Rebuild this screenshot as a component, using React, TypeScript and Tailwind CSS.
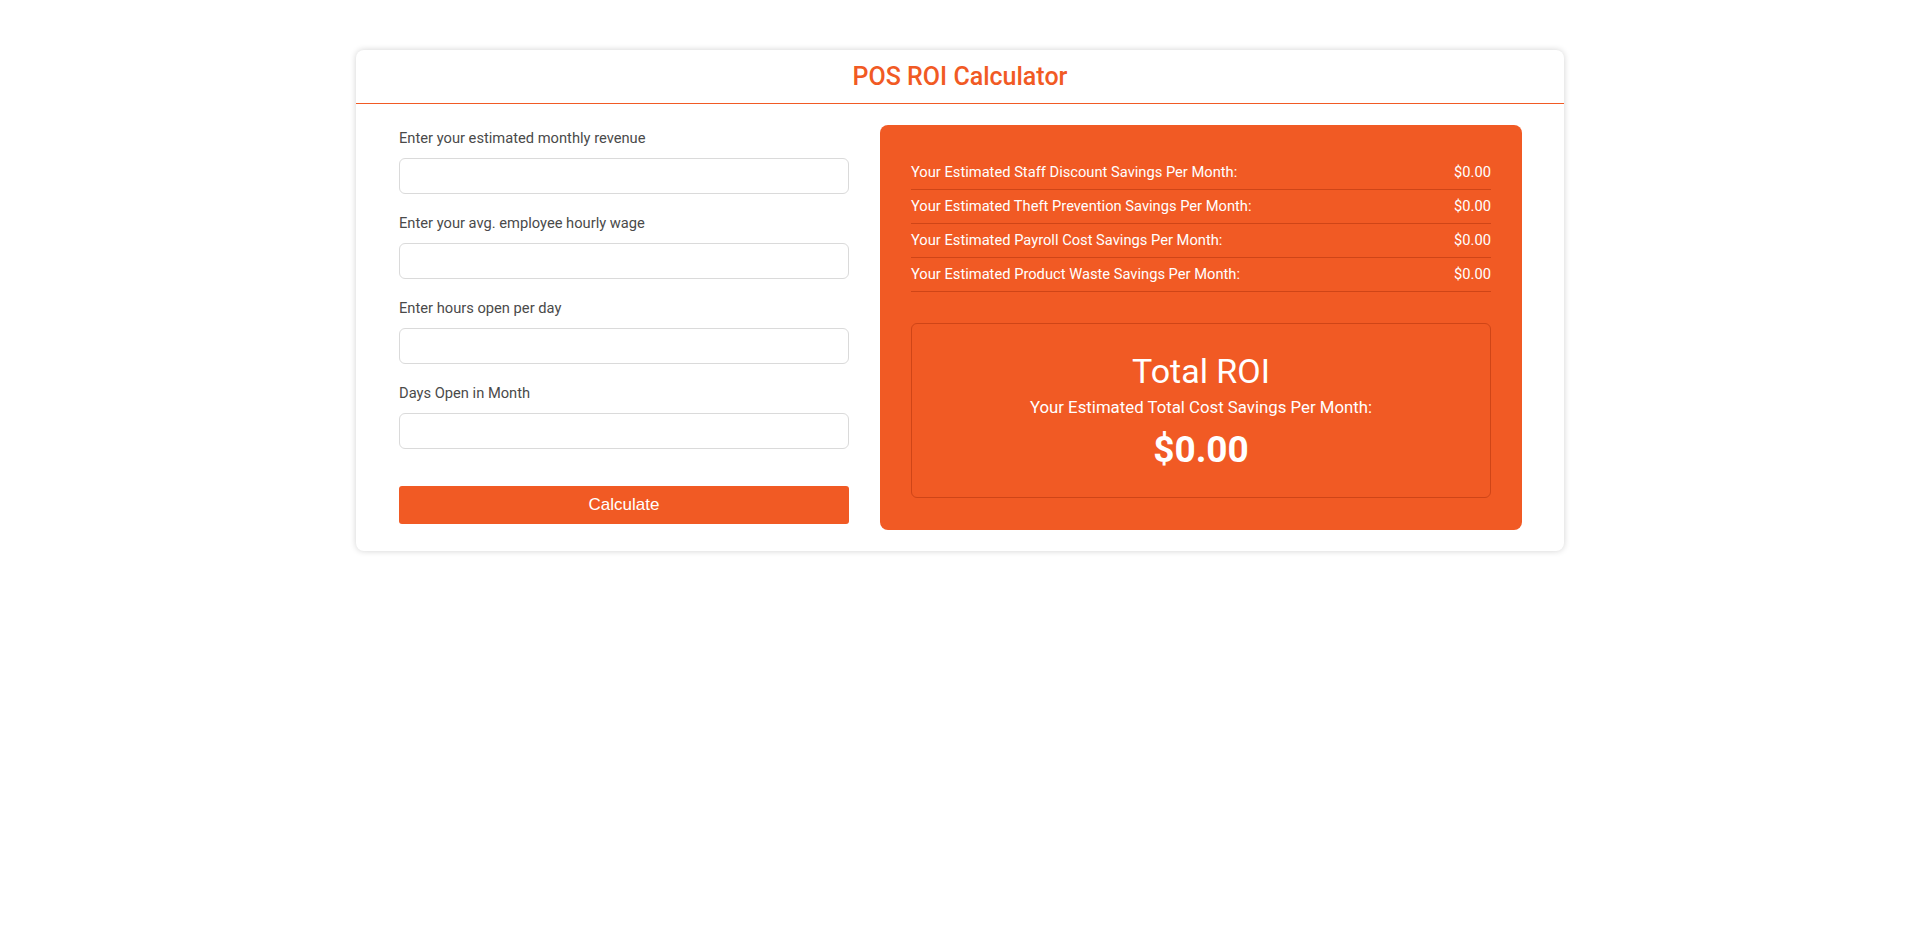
import { useState } from 'react';

const fields = [
  'Enter your estimated monthly revenue',
  'Enter your avg. employee hourly wage',
  'Enter hours open per day',
  'Days Open in Month',
];

const savings = [
  'Your Estimated Staff Discount Savings Per Month:',
  'Your Estimated Theft Prevention Savings Per Month:',
  'Your Estimated Payroll Cost Savings Per Month:',
  'Your Estimated Product Waste Savings Per Month:',
];

export default function App() {
  const [values, setValues] = useState<string[]>(['', '', '', '']);

  return (
    <div className="min-h-screen bg-white pt-[50px] font-['Roboto',sans-serif]">
      <div className="mx-auto w-[1208px] rounded-[8px] bg-white shadow-[0_0_6px_rgba(0,0,0,0.18)]">
        <div className="flex h-[54px] items-center justify-center border-b border-[#f15a24]">
          <h1 className="text-[25px] font-medium leading-[30px] text-[#f15a24]">POS ROI Calculator</h1>
        </div>

        <div className="flex items-start gap-[31px] pl-[43px] pr-[42px] pt-[21px] pb-[21px]">
          <div className="w-[450px] pt-[3px]">
            {fields.map((label, i) => (
              <div key={label} className="mb-[19px]">
                <label className="mb-[10px] block text-[14.7px] leading-[20px] text-[#4a4a4a]">{label}</label>
                <input
                  type="text"
                  value={values[i]}
                  onChange={(e) => {
                    const next = [...values];
                    next[i] = e.target.value;
                    setValues(next);
                  }}
                  className="block h-[36px] w-full rounded-[6px] border border-[#dadada] bg-white px-3 text-[15px] outline-none"
                />
              </div>
            ))}
            <button className="mt-[18px] h-[38px] w-full rounded-[3px] bg-[#f15a24] font-['Liberation_Sans',sans-serif] text-[17px] text-white">
              Calculate
            </button>
          </div>

          <div className="w-[642px] rounded-[8px] bg-[#f15a24] px-[31px] pt-[31px] pb-[32px] text-white">
            {savings.map((label) => (
              <div
                key={label}
                className="flex h-[34px] items-center justify-between border-b border-[#cf4517] text-[14.7px]"
              >
                <span>{label}</span>
                <span>$0.00</span>
              </div>
            ))}

            <div className="mt-[31px] h-[175px] rounded-[6px] border border-[#cf4517] pt-[28px] text-center">
              <div className="text-[34px] leading-[38px]">Total ROI</div>
              <div className="mt-[6px] text-[16.8px] leading-[22px]">Your Estimated Total Cost Savings Per Month:</div>
              <div className="mt-[10px] text-[37px] font-bold leading-[44px]">$0.00</div>
            </div>
          </div>
        </div>
      </div>
    </div>
  );
}
